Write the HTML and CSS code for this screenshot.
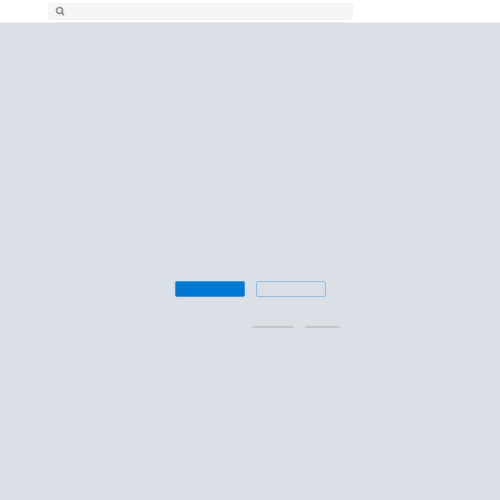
FILE: index.html
```html
<!DOCTYPE html>
<html lang="en">

<head>
    <meta charset="UTF-8">
    <meta name="viewport" content="width=device-width, initial-scale=1.0">
    <title>Search</title>
    <link rel="stylesheet" href="styles.css">
</head>

<body>
    <header class="topbar">
        <div class="search-box">
            <svg class="search-icon" width="10" height="10" viewBox="0 0 10 10" fill="none" stroke="#8b8d91">
                <circle cx="4.5" cy="4.5" r="3" stroke-width="1.7"></circle>
                <path d="M7 7l2 2" stroke-width="1.8"></path>
            </svg>
        </div>
    </header>
    <main class="content">
        <div class="actions">
            <div class="btn btn-primary"></div>
            <div class="btn btn-outline"></div>
        </div>
        <div class="links">
            <div class="link-line link-long"></div>
            <div class="link-line link-short"></div>
        </div>
    </main>
</body>

</html>
```

FILE: styles.css
```css
html,
body {
    height: 100%;
}

body {
    margin: 0;
    display: flex;
    flex-direction: column;
    font-family: "Liberation Sans", Arial, sans-serif;
    background-color: #dbdfe6;
}

.topbar {
    height: 23px;
    padding: 3px 0 0 48px;
    box-sizing: border-box;
    background-color: #fff;
    border-bottom: 1px solid #e9ebee;
    flex-shrink: 0;
}

.search-box {
    width: 305px;
    height: 17px;
    padding: 0 0 1px 6px;
    box-sizing: border-box;
    display: flex;
    align-items: center;
    background-color: #f4f5f7;
    border: 1px solid #f1f2f4;
    border-radius: 3px;
}

.content {
    flex: 1;
    padding-top: 258px;
}

.actions {
    display: flex;
    gap: 11px;
    margin-left: 175px;
}

.btn {
    width: 70px;
    height: 16px;
    box-sizing: border-box;
    border-radius: 2px;
}

.btn-primary {
    background-color: #0078d4;
    border: 1px solid #3d92d8;
}

.btn-outline {
    border: 1px solid #8fbde3;
    box-shadow: inset 0 0 0 1px #d2dce7;
}

.links {
    display: flex;
    gap: 12px;
    margin: 29px 0 0 252px;
}

.link-line {
    height: 2px;
    background-color: #c3c7cb;
}

.link-long {
    width: 41px;
}

.link-short {
    width: 35px;
}
```
